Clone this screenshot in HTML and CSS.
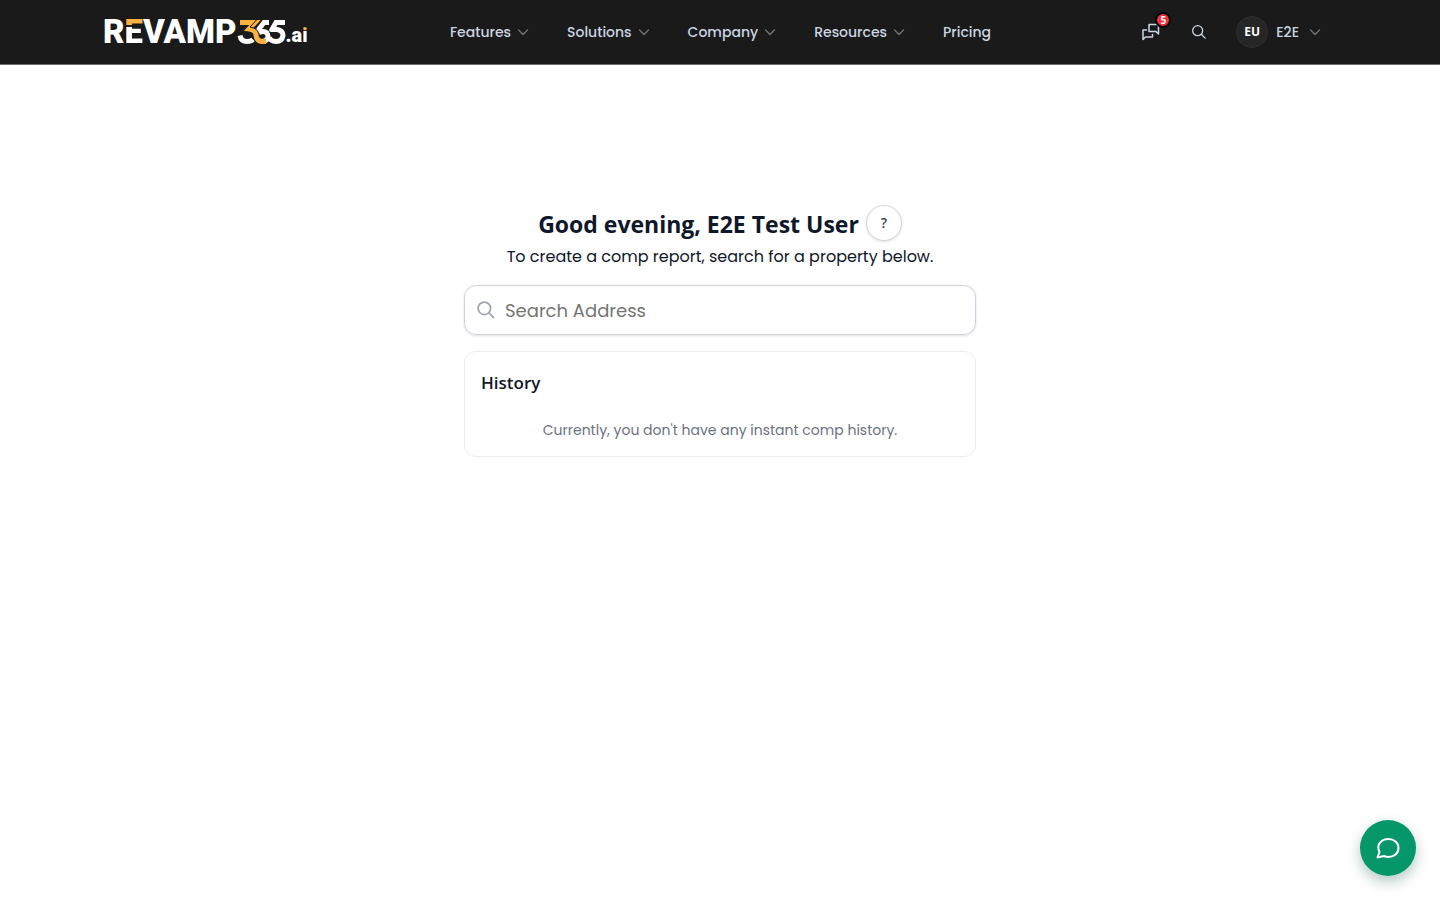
FILE: index.html
```html
<!DOCTYPE html>
<html lang="en">
<head>
<meta charset="utf-8">
<meta name="viewport" content="width=device-width, initial-scale=1">
<title>Revamp365.ai</title>
<link rel="stylesheet" href="styles.css">
</head>
<body>
<svg class="defs" width="0" height="0" aria-hidden="true">
  <symbol id="chevron" viewBox="0 0 16 16"><path d="M3.5 6 8 10.5 12.5 6"/></symbol>
  <symbol id="search" viewBox="0 0 24 24"><circle cx="10" cy="10" r="7.5"/><path d="m15.500 15.500 5.700 5.700"/></symbol>
</svg>
<header class="header">
  <div class="header-inner">
    <a class="logo" href="#" aria-label="Revamp365.ai">
      <span class="logo-word">R<span class="logo-e">E</span>VAMP</span>
      <svg width="49" height="24" viewBox="0 0 49 24" aria-hidden="true">
        <path class="s-white" d="M3 15.500Q4 21.500 10 21.500q4 0 6-2"/>
        <path class="s-white" d="M32 2.500h-5l-5 6.500q-1 2-1 4M22 12.500q8-3 9 3.500 0 5.500-7 5.500"/>
        <path class="s-gold" d="M3 2.500h15l-6 6.500q7 1 7 6 .5 6 6 6.500h4"/>
        <path class="s-white" d="M48 2.500h-9l-4 7h5q6 1 6 6-1 6-7 6-5 0-7-4"/>
        <path class="s-cut" d="M19.500 0 13 7q7 1 8.500 6M35.500 0 30 9q4 2 4 6"/>
      </svg>
      <span class="logo-tld">.a<span class="logo-i">i</span></span>
    </a>
    <nav class="nav" aria-label="Main">
      <button class="nav-item" type="button">Features<svg class="chevron"><use href="#chevron"/></svg></button>
      <button class="nav-item" type="button">Solutions<svg class="chevron"><use href="#chevron"/></svg></button>
      <button class="nav-item" type="button">Company<svg class="chevron"><use href="#chevron"/></svg></button>
      <button class="nav-item" type="button">Resources<svg class="chevron"><use href="#chevron"/></svg></button>
      <a class="nav-item" href="#">Pricing</a>
    </nav>
    <div class="tools">
      <button class="tool" type="button" aria-label="Messages">
        <svg class="icon-chat" viewBox="0 0 20 20"><path d="M8 2.500h9.500v9.500l-2.500-2.500h-7zM5.500 8h-3.500v9.500l2.500-2.500h7v-2.500"/></svg>
        <span class="badge">5</span>
      </button>
      <button class="tool" type="button" aria-label="Search"><svg class="icon-find"><use href="#search"/></svg></button>
      <button class="account" type="button"><span class="avatar">EU</span><span class="account-name">E2E</span><svg class="chevron"><use href="#chevron"/></svg></button>
    </div>
  </div>
</header>
<main class="main">
  <div class="title-row">
    <h1 class="title">Good evening, E2E Test User</h1>
    <button class="help" type="button" aria-label="Help">?</button>
  </div>
  <p class="lead">To create a comp report, search for a property below.</p>
  <label class="search">
    <svg class="search-icon" aria-hidden="true"><use href="#search"/></svg>
    <input class="search-input" type="text" placeholder="Search Address" aria-label="Search Address">
  </label>
  <section class="history">
    <h2 class="history-title">History</h2>
    <p class="history-empty">Currently, you don't have any instant comp history.</p>
  </section>
</main>
<button class="chat" type="button" aria-label="Open chat">
  <svg class="chat-icon" viewBox="0 0 28 28"><path d="M3.500 23.500 5.500 18C2 11 7 5 14.500 5 20 5 24.500 8.800 24.500 14s-4.500 9-10 9q-2.500 0-4.500-1z"/></svg>
</button>
</body>
</html>
```
FILE: styles.css
```css
* { box-sizing: border-box; }
body {
  margin: 0;
  background: #fff;
  color: #0f172a;
  font-family: Poppins, Inter, sans-serif;
}
h1, h2, p { margin: 0; }
button { padding: 0; border: 0; background: none; color: inherit; font: inherit; cursor: pointer; }
a { color: inherit; text-decoration: none; }
svg { display: block; flex: none; fill: none; stroke: currentColor; stroke-linecap: round; stroke-linejoin: round; }
.defs { position: absolute; }

.header { background: #1a1a1a; border-bottom: 1px solid #6b6b6b; }
.header-inner {
  display: grid;
  grid-template-columns: 1fr auto 1fr;
  align-items: center;
  max-width: 1280px;
  height: 64px;
  margin: 0 auto;
  padding: 0 22px 0 23px;
}
.logo { display: flex; align-items: center; color: #fff; }
.logo-word { font: 900 33px/40px Roboto, sans-serif; }
.logo-e {
  background: linear-gradient(#fbb040 13px, #1a1a1a 13px, #1a1a1a 15px, #fff 15px);
  background-clip: text;
  color: transparent;
}
.logo-tld { padding-top: 6px; font: 900 20px/28px Roboto, sans-serif; }
.logo-i {
  background: linear-gradient(#fbb040 8px, #fff 8px);
  background-clip: text;
  color: transparent;
}
.s-white, .s-gold { stroke: #fff; stroke-width: 5; stroke-linecap: butt; stroke-linejoin: miter; }
.s-gold { stroke: #fbb040; }
.s-cut { stroke: #1a1a1a; stroke-width: 1; }

.nav { display: flex; align-items: center; gap: 36px; }
.nav-item {
  display: flex;
  align-items: center;
  gap: 4px;
  color: #cbd5e1;
  font-size: 14px;
  font-weight: 500;
  line-height: 20px;
}
.chevron { width: 16px; height: 16px; color: #71757c; stroke-width: 1.3; }

.tools { display: flex; align-items: center; justify-content: flex-end; gap: 16px; padding-right: 15px; color: #cbd5e1; }
.tool { position: relative; display: grid; place-items: center; width: 32px; height: 32px; }
.icon-chat { width: 20px; height: 20px; stroke-width: 1.5; }
.icon-find { width: 16px; height: 16px; stroke-width: 2; }
.badge {
  position: absolute;
  top: -4px;
  right: -4px;
  width: 16px;
  height: 16px;
  border: 2px solid #000;
  border-radius: 50%;
  background: #fb2c36;
  color: #fff;
  font: 700 10px/12px "Open Sans", sans-serif;
}
.account { display: flex; align-items: center; gap: 8px; margin-left: 5px; font-size: 14px; font-weight: 500; }
.avatar {
  display: grid;
  place-items: center;
  width: 32px;
  height: 32px;
  border: 1px solid #303030;
  border-radius: 50%;
  background: #262626;
  color: #fff;
  font: 700 12px/16px "Open Sans", sans-serif;
}

.main { max-width: 544px; margin: 0 auto; padding: 140px 16px 24px; }
.title-row { display: flex; align-items: center; justify-content: center; gap: 7px; }
.title { padding-top: 2px; font: 700 23px/32px "Open Sans", sans-serif; }
.help {
  width: 36px;
  height: 36px;
  border: 1px solid #d1d5db;
  border-radius: 50%;
  background: #fff;
  box-shadow: 0 1px 3px rgba(0, 0, 0, .12);
  color: #374151;
  font: 600 14px/20px "Open Sans", sans-serif;
}
.lead { margin-top: 4px; font-size: 16px; line-height: 24px; text-align: center; }
.search {
  display: flex;
  align-items: center;
  gap: 9px;
  height: 50px;
  margin-top: 16px;
  padding: 0 11px;
  border: 1px solid #d1d1db;
  border-radius: 12px;
  box-shadow: 0 1px 3px rgba(0, 0, 0, .12);
}
.search-icon { width: 20px; height: 20px; color: #9ca3af; stroke-width: 2; }
.search-input { flex: 1; min-width: 0; padding: 2px 0 0; border: 0; outline: 0; background: none; color: inherit; font: 400 18px/28px Poppins, Inter, sans-serif; }
.search-input::placeholder { color: #757575; }
.history { margin-top: 16px; padding: 16px; border: 1px solid #ececee; border-radius: 12px; }
.history-title { padding-top: 1px; font: 600 17px/28px "Open Sans", sans-serif; }
.history-empty { margin-top: 23px; color: #6b7280; font-size: 14px; line-height: 20px; text-align: center; }

.chat {
  position: fixed;
  right: 24px;
  bottom: 24px;
  display: grid;
  place-items: center;
  width: 56px;
  height: 56px;
  border-radius: 50%;
  background: #059669;
  box-shadow: 0 6px 14px rgba(6, 78, 59, .3);
  color: #fff;
}
.chat-icon { width: 28px; height: 28px; stroke-width: 2; }
```
